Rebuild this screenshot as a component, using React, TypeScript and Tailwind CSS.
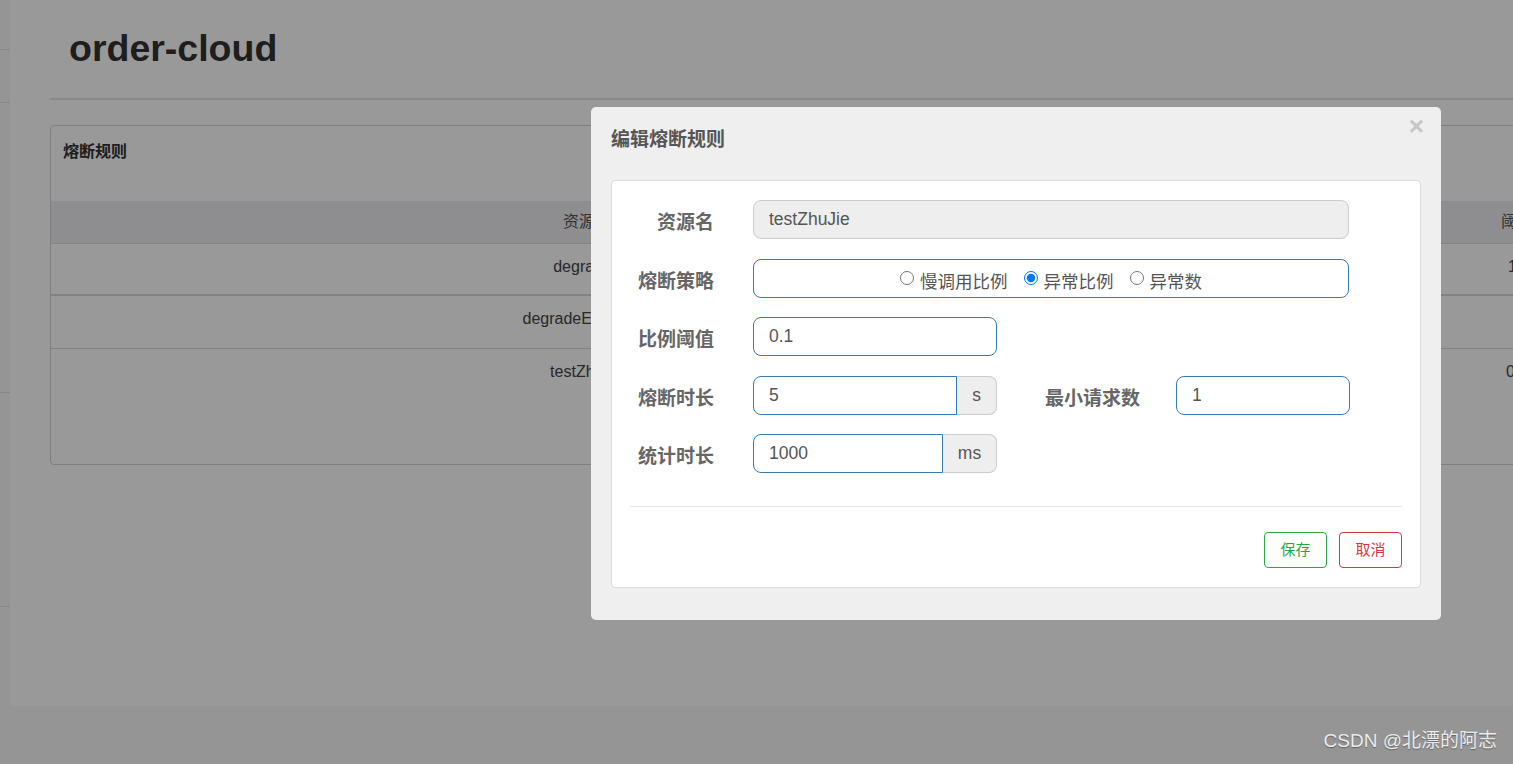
import type { ReactNode } from "react";

const rows = [
  { name: "degrade1", value: "10", h: "h-[52px]", border: "border-b-2" },
  { name: "degradeException", value: "", h: "h-[53px]", border: "border-b" },
  { name: "testZhuJie", value: "0.1", h: "h-[115px]", border: "" },
];

function FormRow({ label, children }: { label: string; children: ReactNode }) {
  return (
    <div className="flex h-[39px] items-center">
      <div className="w-[84px] shrink-0 pt-[6px] text-right text-[19px] font-bold leading-none text-[#666]">
        {label}
      </div>
      <div className="ml-[39px] flex h-full items-center">{children}</div>
    </div>
  );
}

function Radio({ label, checked }: { label: string; checked?: boolean }) {
  return (
    <label className="flex items-center">
      <input
        type="radio"
        name="grade"
        defaultChecked={checked}
        className="m-0 h-[14px] w-[14px]"
      />
      <span className="ml-[6px] pt-[8px] text-[17.5px] text-[#555]">{label}</span>
    </label>
  );
}

function DegradeModal() {
  return (
    <div className="absolute left-[591px] top-[107px] w-[850px] rounded-[5px] bg-[#efefef] px-[20px] pb-[32px] pt-[20px]">
      <button className="absolute right-[17px] top-[6px] text-[26px] font-bold leading-none text-[#c6c6c6]">
        ×
      </button>
      <h4 className="text-[19px] font-bold leading-[26px] text-[#555]">编辑熔断规则</h4>
      <div className="mt-[27px] rounded-[4px] border border-[#dcdcdc] bg-white px-[18px] pb-[19px] pt-[19px]">
        <div className="flex flex-col gap-[19.5px]">
          <FormRow label="资源名">
            <div className="flex h-full w-[596px] items-center rounded-[8px] border border-[#cccccc] bg-[#eeeeee] pl-[15px] text-[17.5px] text-[#555]">
              testZhuJie
            </div>
          </FormRow>
          <FormRow label="熔断策略">
            <div className="flex h-full w-[596px] items-center justify-center gap-[16px] rounded-[8px] border border-[#337ab7] bg-white">
              <Radio label="慢调用比例" />
              <Radio label="异常比例" checked />
              <Radio label="异常数" />
            </div>
          </FormRow>
          <FormRow label="比例阈值">
            <div className="flex h-full w-[244px] items-center rounded-[8px] border border-[#337ab7] bg-white pl-[15px] text-[17.5px] text-[#555]">
              0.1
            </div>
          </FormRow>
          <FormRow label="熔断时长">
            <div className="flex h-full w-[204px] items-center rounded-l-[8px] border border-[#337ab7] bg-white pl-[15px] text-[17.5px] text-[#555]">
              5
            </div>
            <div className="flex h-full w-[40px] items-center justify-center rounded-r-[8px] border border-l-0 border-[#cccccc] bg-[#eeeeee] text-[17.5px] text-[#555]">
              s
            </div>
            <div className="ml-[48px] w-[96px] pt-[6px] text-[19px] font-bold leading-none text-[#666]">最小请求数</div>
            <div className="ml-[35px] flex h-full w-[174px] items-center rounded-[8px] border border-[#337ab7] bg-white pl-[15px] text-[17.5px] text-[#555]">
              1
            </div>
          </FormRow>
          <FormRow label="统计时长">
            <div className="flex h-full w-[190px] items-center rounded-l-[8px] border border-[#337ab7] bg-white pl-[15px] text-[17.5px] text-[#555]">
              1000
            </div>
            <div className="flex h-full w-[54px] items-center justify-center rounded-r-[8px] border border-l-0 border-[#cccccc] bg-[#eeeeee] text-[17.5px] text-[#555]">
              ms
            </div>
          </FormRow>
        </div>
        <div className="mt-[33px] h-px bg-[#e5e5e5]" />
        <div className="mt-[25px] flex justify-end gap-[12px]">
          <button className="h-[36px] w-[63px] rounded-[4px] border border-[#28a745] text-[15px] text-[#28a745]">
            保存
          </button>
          <button className="h-[36px] w-[63px] rounded-[4px] border border-[#dc3545] text-[15px] text-[#dc3545]">
            取消
          </button>
        </div>
      </div>
    </div>
  );
}

export default function App() {
  return (
    <div className="relative h-[764px] w-full overflow-hidden bg-[#f8f8f8] [font-family:'Liberation_Sans','Noto_Sans_CJK_SC',sans-serif]">
      <div className="flex h-[706px]">
        <div className="w-[10px] shrink-0 bg-[#f9f9f9]">
          <div className="h-[50px] border-b border-[#e2e2e2]" />
          <div className="h-[53px] border-b border-[#e2e2e2]" />
          <div className="h-[290px] border-b border-[#e2e2e2]" />
          <div className="h-[214px] border-b border-[#e2e2e2]" />
        </div>
        <div className="min-w-0 flex-1 bg-white">
          <div className="w-[1640px] pl-[40px]">
            <h1 className="pl-[19px] pt-[28px] text-[37.5px] font-bold leading-[41px] text-[#333]">
              order-cloud
            </h1>
            <div className="mt-[29px] h-[2px] bg-[#e6e6e6]" />
            <div className="mt-[25px] w-[1600px] rounded-[4px] border border-[#d4d4d4]">
              <div className="h-[75px] px-[12px] pt-[16px] text-[16px] font-bold leading-[20px] text-[#333]">
                熔断规则
              </div>
              <div className="flex h-[43px] items-center border-b border-[#dddddd] bg-[#ededf0] text-[16px] text-[#555]">
                <div className="w-[1072px] text-center">资源名</div>
                <div className="w-[320px] text-center">熔断策略</div>
                <div className="w-[148px] text-center">阈值</div>
              </div>
              {rows.map((r) => (
                <div
                  key={r.name}
                  className={`flex ${r.h} ${r.border} border-[#d9d9d9] pt-[13px] text-[16px] leading-[20px] text-[#444]`}
                >
                  <div className="w-[1072px] text-center">{r.name}</div>
                  <div className="w-[320px] text-center">异常比例</div>
                  <div className="w-[148px] text-center">{r.value}</div>
                </div>
              ))}
            </div>
          </div>
        </div>
      </div>
      <div className="absolute inset-0 bg-black/40" />
      <DegradeModal />
      <div className="absolute bottom-[9px] right-[16px] text-[19px] text-[#ececec] [text-shadow:0_1px_1px_rgba(0,0,0,0.35)]">
        CSDN @北漂的阿志
      </div>
    </div>
  );
}
